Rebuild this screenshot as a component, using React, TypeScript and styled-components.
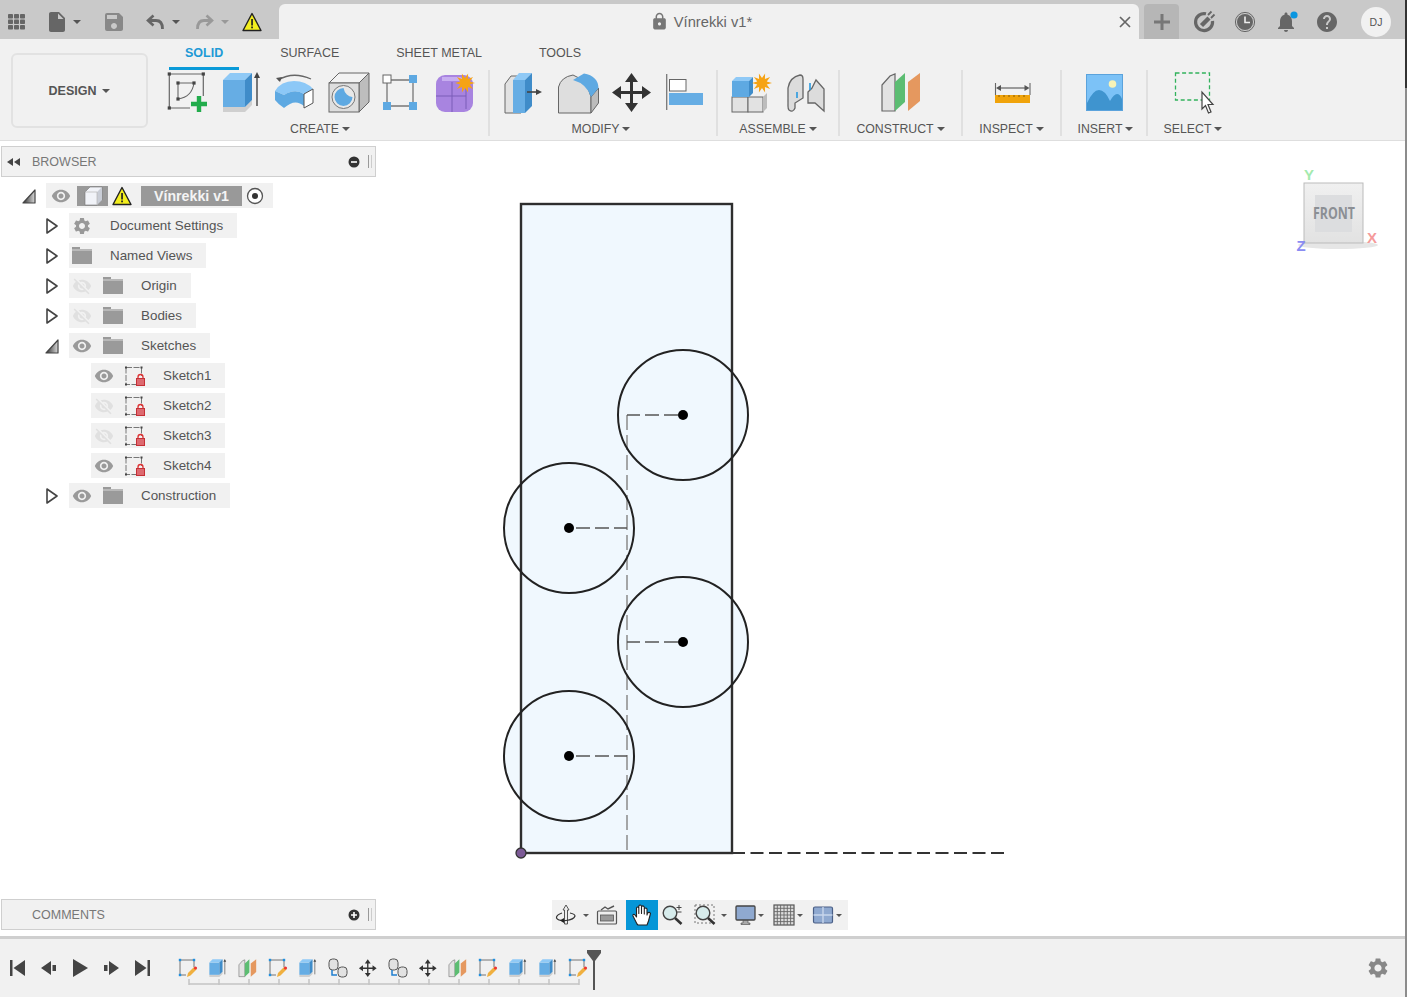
import React from "react";
import styled, { createGlobalStyle } from "styled-components";
import {
  MdHelp,
  MdInsertDriveFile,
  MdLock,
  MdNotifications,
  MdSave,
  MdSettings,
  MdVisibility,
  MdVisibilityOff,
} from "react-icons/md";

const GlobalStyle = createGlobalStyle`
  html, body {
    margin: 0;
    padding: 0;
    background: #fff;
  }
  body {
    font-family: "Liberation Sans", Arial, sans-serif;
    overflow: hidden;
  }
`;

const Page = styled.div`
  position: relative;
  display: flex;
  flex-direction: column;
  width: 1407px;
  height: 997px;
`;

const WindowEdge = styled.div`
  position: absolute;
  top: 0;
  right: 0;
  bottom: 0;
  width: 2px;
  background: #8c8c8c;
`;

const EdgeThumb = styled.div`
  height: 88px;
  background: #333;
`;

/* ---------- title bar ---------- */

const TitleBar = styled.div`
  display: flex;
  flex: none;
  height: 35px;
  padding-top: 4px;
  background: #c9c9c9;
`;

const QuickTools = styled.div`
  display: flex;
  align-items: center;
  width: 279px;
  flex: none;
  color: #666;
`;

const Slot = styled.span<{ $ml?: number; $color?: string }>`
  display: inline-flex;
  flex: none;
  margin-left: ${(p) => p.$ml ?? 0}px;
  color: ${(p) => p.$color ?? "inherit"};
`;

const Caret = styled.span<{ $ml?: number; $color?: string; $size?: number }>`
  display: inline-block;
  flex: none;
  margin-left: ${(p) => p.$ml ?? 0}px;
  border-left: ${(p) => p.$size ?? 4}px solid transparent;
  border-right: ${(p) => p.$size ?? 4}px solid transparent;
  border-top: ${(p) => p.$size ?? 4}px solid ${(p) => p.$color ?? "#555"};
`;

const DocTab = styled.div`
  display: flex;
  align-items: center;
  width: 860px;
  flex: none;
  background: #f1f1f1;
  border-radius: 6px 6px 0 0;
  padding-left: 12px;
  box-sizing: border-box;
`;

const DocTitle = styled.div`
  flex: 1;
  display: flex;
  align-items: center;
  justify-content: center;
  gap: 5px;
  color: #666;
  font-size: 14.7px;
`;

const CloseButton = styled.div`
  width: 28px;
  display: flex;
  justify-content: center;
`;

const PlusButton = styled.div`
  width: 35px;
  margin-left: 5px;
  flex: none;
  display: flex;
  align-items: center;
  justify-content: center;
  background: #b6b6b6;
  border-radius: 4px 4px 0 0;
`;

const StatusTools = styled.div`
  display: flex;
  align-items: center;
  gap: 17px;
  margin-left: 13px;
  color: #666;
`;

const BellBox = styled.span`
  position: relative;
  display: inline-flex;
`;

const BellDot = styled.svg`
  position: absolute;
  right: 0;
  top: 1px;
`;

const Avatar = styled.div`
  width: 30px;
  height: 30px;
  margin-left: 22px;
  flex: none;
  align-self: center;
  border-radius: 50%;
  background: #f1f1f1;
  color: #555;
  font-size: 10.5px;
  display: flex;
  align-items: center;
  justify-content: center;
`;

/* ---------- ribbon ---------- */

const Ribbon = styled.div`
  display: flex;
  flex: none;
  height: 101px;
  padding-left: 11px;
  background: #f1f1f1;
  border-bottom: 1px solid #dedede;
`;

const DesignButton = styled.div`
  width: 137px;
  height: 75px;
  margin-top: 14px;
  box-sizing: border-box;
  border: 2px solid #e2e2e2;
  border-radius: 6px;
  display: flex;
  align-items: center;
  justify-content: center;
  gap: 6px;
  font-size: 12.5px;
  font-weight: 700;
  color: #555;
`;

const ToolArea = styled.div`
  margin-left: 12px;
  display: flex;
  flex-direction: column;
`;

const Tabs = styled.div`
  display: flex;
  gap: 25px;
  height: 31px;
  margin-left: 9px;
`;

const Tab = styled.div<{ $active?: boolean }>`
  box-sizing: border-box;
  padding: 6px 16px 0;
  font-size: 12.5px;
  line-height: 16px;
  color: ${(p) => (p.$active ? "#1e9ad6" : "#555")};
  font-weight: ${(p) => (p.$active ? 700 : 400)};
  border-bottom: 3px solid ${(p) => (p.$active ? "#0a9ad8" : "transparent")};
`;

const Groups = styled.div`
  display: flex;
`;

const Group = styled.div<{ $width: number; $padRight?: number; $padLeft?: number; $last?: boolean }>`
  width: ${(p) => p.$width}px;
  box-sizing: border-box;
  padding-right: ${(p) => p.$padRight ?? 0}px;
  padding-left: ${(p) => p.$padLeft ?? 0}px;
  display: flex;
  flex-direction: column;
  height: 66px;
  border-right: 2px solid ${(p) => (p.$last ? "transparent" : "#e0e0e0")};
`;

const GroupIcons = styled.div<{ $pad: number }>`
  display: flex;
  gap: 9.6px;
  height: 44px;
  padding-left: ${(p) => p.$pad}px;
`;

const GroupLabel = styled.div`
  margin-top: 7px;
  display: flex;
  align-items: center;
  justify-content: center;
  gap: 3px;
  font-size: 12.3px;
  line-height: 16px;
  color: #555;
`;

/* ---------- workspace ---------- */

const Workspace = styled.div`
  position: relative;
  flex: 1;
  min-height: 0;
`;

const Drawing = styled.svg`
  display: block;
  width: 100%;
  height: 100%;
`;

const SidePanel = styled.div`
  position: absolute;
  top: 5px;
  bottom: 6px;
  left: 0;
  width: 376px;
  display: flex;
  flex-direction: column;
`;

const PanelBar = styled.div`
  height: 31px;
  margin-left: 1px;
  flex: none;
  box-sizing: border-box;
  border: 1px solid #cfcfcf;
  background: #f1f1f1;
  display: flex;
  align-items: center;
  font-size: 12.5px;
  color: #777;
`;

const PanelLabel = styled.span<{ $ml: number }>`
  margin-left: ${(p) => p.$ml}px;
  flex: 1;
`;

const PanelHandle = styled.span`
  width: 2px;
  height: 13px;
  margin: 0 3px 0 8px;
  border-left: 1px solid #999;
  border-right: 1px solid #ccc;
`;

const CollapseArrows = styled.svg`
  margin-left: 5px;
`;

const Tree = styled.div`
  flex: 1;
  margin-top: 6px;
  display: flex;
  flex-direction: column;
  gap: 5px;
`;

const TreeRow = styled.div<{ $level: number }>`
  display: flex;
  align-items: center;
  gap: 10px;
  margin-left: ${(p) => [22, 45, 67][p.$level]}px;
`;

const Expander = styled.span`
  width: 14px;
  height: 16px;
  flex: none;
  display: inline-flex;
`;

const Chip = styled.div`
  display: flex;
  align-items: center;
  height: 25px;
  background: #f1f1f1;
  padding: 0 14px 0 3px;
  font-size: 13.4px;
  color: #555;
`;

const RootChip = styled(Chip)`
  padding: 0 9px 0 5px;
`;

const ChipLabel = styled.span`
  margin-left: 18px;
`;

const EyeSlot = styled.span<{ $off?: boolean }>`
  display: inline-flex;
  width: 20px;
  margin-right: 11px;
  justify-content: center;
  color: ${(p) => (p.$off ? "#e0e0e0" : "#9a9a9a")};
`;

const ModelBox = styled.span`
  width: 31px;
  height: 20px;
  margin-left: -5px;
  background: #999;
  display: inline-flex;
  align-items: center;
  justify-content: center;
`;

const RootName = styled.span`
  width: 101px;
  height: 20px;
  margin: 0 4px 0 9px;
  background: #999;
  color: #f4f4f4;
  font-weight: 700;
  font-size: 14.2px;
  display: inline-flex;
  align-items: center;
  justify-content: center;
`;

const NavBar = styled.div`
  position: absolute;
  left: 552px;
  bottom: 6px;
  height: 30px;
  display: flex;
  align-items: center;
  padding: 0 6px 0 3px;
  background: #f1f1f1;
`;

const HandButton = styled.span`
  width: 32px;
  height: 30px;
  margin-left: 8px;
  background: #0696d7;
  display: inline-flex;
  align-items: center;
  justify-content: center;
`;

const ViewCube = styled.svg`
  position: absolute;
  left: 1290px;
  top: 24px;
`;

/* ---------- timeline ---------- */

const Timeline = styled.div`
  flex: none;
  height: 58px;
  display: flex;
  align-items: center;
  padding-left: 10px;
  background: #f1f1f1;
  border-top: 3px solid #cfcfcf;
`;

const Transport = styled.div`
  display: flex;
  gap: 15px;
`;

const History = styled.div`
  position: relative;
  height: 36px;
  margin-left: 28px;
  padding-top: 8px;
  box-sizing: border-box;
`;

const HistoryIcons = styled.div`
  display: flex;
  gap: 10px;
  height: 20px;
`;

const Bracket = styled.svg`
  display: block;
`;

const Marker = styled.svg`
  position: absolute;
  left: 409px;
  top: 0;
`;

const GearSlot = styled.span`
  margin-left: auto;
  margin-right: 17px;
  display: inline-flex;
  color: #888;
`;

/* ---------- drawings ---------- */

type IconProps = { size?: number };

const Warning = ({ size = 20 }: IconProps) => (
  <svg width={size} height={size} viewBox="0 0 20 20">
    <path d="M10 1.5 19 18.5H1Z" fill="#f3ee1e" stroke="#222" strokeWidth="1.4" strokeLinejoin="round" />
    <rect x="9.2" y="7" width="1.7" height="6.5" fill="#222" />
    <rect x="9.2" y="14.5" width="1.7" height="1.8" fill="#222" />
  </svg>
);

const AppGrid = () => (
  <svg width="18" height="16" viewBox="0 0 18 16" fill="#666">
    {[0, 6, 12].map((x) =>
      [0, 5.5, 11].map((y) => <rect key={`${x}-${y}`} x={x} y={y} width="5" height="4.6" rx="0.8" />)
    )}
  </svg>
);

const UndoArrow = ({ color, flip }: { color: string; flip?: boolean }) => (
  <svg width="18" height="18" viewBox="0 0 18 18" transform={flip ? "scale(-1 1)" : undefined}>
    <path d="M7.5 2.5 2 7.5 7.5 12.5" fill="none" stroke={color} strokeWidth="2.6" />
    <path d="M3 7.5H10Q16.5 7.5 16.5 16" fill="none" stroke={color} strokeWidth="2.8" />
  </svg>
);

const ReconnectIcon = () => (
  <svg width="24" height="24" viewBox="0 0 24 24">
    <path d="M14 3.8A8.5 8.5 0 1 0 20.5 11" fill="none" stroke="#666" strokeWidth="3.2" />
    <path d="M9.500 15.500 17 8" stroke="#666" strokeWidth="4.500" />
    <path d="M16 5 19.500 1.500M19 8 22.500 4.500" stroke="#666" strokeWidth="1.800" />
  </svg>
);

const ClockIcon = () => (
  <svg width="24" height="24" viewBox="0 0 24 24">
    <circle cx="12" cy="12" r="9.6" fill="none" stroke="#666" strokeWidth="1" />
    <circle cx="12" cy="12" r="8" fill="#666" />
    <path d="M12 6.5V12.5H17" fill="none" stroke="#eee" strokeWidth="1.6" />
  </svg>
);

const BellIcon = () => (
  <BellBox>
    <MdNotifications size={24} />
    <BellDot width="8" height="8" viewBox="0 0 8 8">
      <circle cx="4" cy="4" r="3.6" fill="#0a96e0" />
    </BellDot>
  </BellBox>
);

const CreateSketch = ({ size = 44 }: IconProps) => (
  <svg width={size} height={size} viewBox="0 0 44 44">
    <path d="M3.3 4H37.3V26M3.3 4V38H24" fill="none" stroke="#666" strokeWidth="1.2" />
    <path d="M12 29V13H28M12 29Q26 27 28 13" fill="none" stroke="#666" strokeWidth="1.1" />
    {[[3.3, 4], [37.3, 4], [3.3, 38], [12, 13], [28, 13], [12, 29]].map(([x, y]) => (
      <rect key={`${x}-${y}`} x={x - 1.6} y={y - 1.6} width="3.2" height="3.2" fill="#444" />
    ))}
    <path d="M33 26V42M25 34H41" stroke="#22ac4c" strokeWidth="4.4" />
  </svg>
);

const Extrude = ({ size = 44 }: IconProps) => (
  <svg width={size} height={size} viewBox="0 0 44 44">
    <path d="M3 37H25L32 30V35L25 42H3Z" fill="#cfcfcf" />
    <path d="M3 10H25V37H3Z" fill="#66ade4" />
    <path d="M3 10 10 3H32L25 10Z" fill="#8fc9f6" />
    <path d="M25 10 32 3V30L25 37Z" fill="#3f8cc9" />
    <path d="M37 6V36" stroke="#444" strokeWidth="1.4" />
    <path d="M37 2 40 8H34Z" fill="#444" />
  </svg>
);

const Sweep = () => (
  <svg width="44" height="44" viewBox="0 0 44 44">
    <path d="M5 10Q20 1 38 9" fill="none" stroke="#666" strokeWidth="1.3" />
    <path d="M3 8 9 7 7 12Z" fill="#555" />
    <path d="M2 21Q8 11 21 11Q33 11 40 19L31 24Q22 18 11 25Z" fill="#8cc8f7" />
    <path d="M2 21 11 25Q22 18 31 24V36Q22 28 11 38Q5 34 2 30Z" fill="#5ea9e2" />
    <path d="M31 24 40 19V33L31 38Z" fill="#fff" stroke="#555" strokeWidth="1" />
  </svg>
);

const Hole = () => (
  <svg width="44" height="44" viewBox="0 0 44 44">
    <path d="M2 13 12 3H42L32 13Z" fill="#f3f3f3" stroke="#666" />
    <path d="M32 13 42 3V32L32 42Z" fill="#bdbdbd" stroke="#666" />
    <rect x="2" y="13" width="30" height="29" fill="#dedede" stroke="#666" />
    <circle cx="16.5" cy="27" r="11.5" fill="#e8e8e8" stroke="#777" />
    <path d="M16.5 18a9 9 0 1 0 9 9 9 12 0 0 1-9-9Z" fill="#5ea9e2" />
  </svg>
);

const BoxEdit = () => (
  <svg width="44" height="44" viewBox="0 0 44 44">
    <path d="M7 10H33V36H7Z" fill="none" stroke="#777" strokeWidth="1.3" />
    <rect x="3" y="5" width="8" height="8" fill="#fff" stroke="#666" />
    {[[29, 5], [3, 32], [29, 32]].map(([x, y]) => (
      <rect key={x * y} x={x} y={y} width="8" height="8" fill="#5ea9e2" />
    ))}
  </svg>
);

const SparkStar = ({ cx, cy, r }: { cx: number; cy: number; r: number }) => {
  const points = Array.from({ length: 20 }, (_, i) => {
    const rad = i % 2 ? r * 0.5 : r;
    const a = (i * Math.PI) / 10;
    return `${cx + rad * Math.cos(a)},${cy + rad * Math.sin(a)}`;
  }).join(" ");
  return <polygon points={points} fill="#f6a314" />;
};

const FormBody = () => (
  <svg width="44" height="44" viewBox="0 0 44 44">
    <rect x="2" y="5" width="37" height="37" rx="9" fill="#a884e0" />
    <path d="M8 9H26L34 15" fill="none" stroke="#c7aef0" strokeWidth="4" />
    <path d="M2 26H32M18 12V42M32 14V39" fill="none" stroke="#7a5cb8" strokeWidth="1" />
    <SparkStar cx={31} cy={13} r={10} />
  </svg>
);

const PressPull = () => (
  <svg width="44" height="44" viewBox="0 0 44 44">
    <path d="M2 14 8 6H18V43H2Z" fill="#e2e2e2" stroke="#666" />
    <path d="M10 10H22V43H10Z" fill="#66ade4" />
    <path d="M10 10 16 3H29L22 10Z" fill="#8fc9f6" />
    <path d="M22 10 29 3V36L22 43Z" fill="#3f8cc9" />
    <path d="M24 22H34" stroke="#444" strokeWidth="1.6" />
    <path d="M39 22 33 19V25Z" fill="#444" />
  </svg>
);

const Fillet = () => (
  <svg width="44" height="44" viewBox="0 0 44 44">
    <path d="M1.500 43V17Q4 7 16 5Q30 10 34 27V43Z" fill="#dedede" stroke="#666" />
    <path d="M34 27 41.500 18V33L34 43Z" fill="#bcbcbc" stroke="#666" />
    <path d="M16 10 27 3.500Q41 6 41.500 18L34 27Q30 14 16 10Z" fill="#5ea9e2" />
  </svg>
);

const MoveIcon = ({ size = 44 }: IconProps) => (
  <svg width={size} height={size} viewBox="0 0 44 44">
    <path d="M21.5 8V37M7 22.5H36" stroke="#333" strokeWidth="3" />
    <path d="M21.5 3 28 12H15ZM21.5 42 28 33H15ZM2 22.5 11 16V29ZM41 22.5 32 16V29Z" fill="#333" />
  </svg>
);

const Align = () => (
  <svg width="44" height="44" viewBox="0 0 44 44">
    <path d="M2.7 4V40" stroke="#777" strokeWidth="1.3" />
    <rect x="5.5" y="9.5" width="16.5" height="11.5" fill="#fff" stroke="#666" />
    <rect x="5" y="23" width="34" height="12" fill="#66ade4" />
  </svg>
);

const NewComponent = () => (
  <svg width="44" height="44" viewBox="0 0 44 44">
    <rect x="2" y="27" width="16" height="15" fill="#e2e2e2" stroke="#666" />
    <rect x="18" y="27" width="15" height="15" fill="#e2e2e2" stroke="#666" />
    <path d="M33 27 37 23V38L33 42Z" fill="#bcbcbc" />
    <rect x="2" y="11" width="17" height="16" fill="#5ea9e2" />
    <path d="M2 11 6 7H23L19 11Z" fill="#8fc9f6" />
    <path d="M19 11 23 7V23L19 27Z" fill="#3f8cc9" />
    <SparkStar cx={32} cy={13} r={10} />
  </svg>
);

const JointIcon = () => (
  <svg width="44" height="44" viewBox="0 0 44 44">
    <path d="M4 18Q6 7 16 5Q19 5 19 9V28L11 33V38Q9 43 5 40Q4 39 4 36Z" fill="#dcdcdc" stroke="#666" strokeWidth="1.3" />
    <path d="M28 18 32 10 40 19V41L31 33H24V22Z" fill="#dcdcdc" stroke="#666" strokeWidth="1.3" />
    <path d="M13 22V28M26 13V20" stroke="#2a9ae0" strokeWidth="1.6" />
  </svg>
);

const ConstructPlane = ({ size = 44 }: IconProps) => (
  <svg width={size} height={size} viewBox="0 0 44 44">
    <path d="M2 15 10 6 15 4V41H2Z" fill="#e2e2e2" stroke="#666" strokeWidth="1.2" />
    <path d="M15 12 25 3V32L15 41Z" fill="#5cbd72" />
    <path d="M28 12 40 3V31L28 41Z" fill="#e5985f" />
  </svg>
);

const MeasureIcon = () => (
  <svg width="44" height="44" viewBox="0 0 44 44">
    <path d="M4.5 13V25M39 13V25" stroke="#666" strokeWidth="1.1" />
    <path d="M7 18H37" stroke="#555" strokeWidth="1.1" />
    <path d="M5 18 10 15V21ZM38.5 18 33.5 15V21Z" fill="#555" />
    <rect x="4" y="25" width="35" height="8" fill="#f0a30a" />
    <path d="M8 25v2M13 25v2M18 25v2M23 25v2M28 25v2M33 25v2" stroke="#8a5c00" strokeWidth="1" />
  </svg>
);

const InsertIcon = () => (
  <svg width="44" height="44" viewBox="0 0 44 44">
    <rect x="3.5" y="4.5" width="36" height="36" fill="#7cc2f7" stroke="#5ba3dc" />
    <circle cx="29.5" cy="14" r="3.8" fill="#f7f3b8" />
    <path d="M4 33Q10 20 16 20Q22 20 27 31Q31 24 34 24Q37 24 39 29V40H4Z" fill="#3f94cf" />
  </svg>
);

const SelectIcon = () => (
  <svg width="44" height="44" viewBox="0 0 44 44">
    <rect x="3.5" y="3" width="34" height="27" fill="none" stroke="#32b25c" strokeWidth="1.3" strokeDasharray="4 2.6" />
    <path d="M30 22V39L33.5 35.5 36.5 43 39 42 36 34.5H41Z" fill="#fff" stroke="#444" strokeWidth="1.2" />
  </svg>
);

const TreeEye = ({ off }: { off?: boolean }) => (
  <EyeSlot $off={off}>{off ? <MdVisibilityOff size={20} /> : <MdVisibility size={20} />}</EyeSlot>
);

const FolderIcon = () => (
  <svg width="20" height="17" viewBox="0 0 20 17">
    <path d="M0 0H8V2H20V17H0Z" fill="#9a9a9a" />
    <path d="M0 3H20" stroke="#d6d6d6" strokeWidth="1" />
  </svg>
);

const TreeSketchIcon = () => (
  <svg width="20" height="20" viewBox="0 0 20 20">
    <path d="M1 1.5H16.5M1 1.5V18.5H11M16.5 1.5V10" fill="none" stroke="#777" strokeWidth="1" strokeDasharray="6 1.5" />
    {[[1, 1.5], [16.5, 1.5], [1, 18.5]].map(([x, y]) => (
      <rect key={`${x}-${y}`} x={x - 1} y={y - 1} width="2" height="2" fill="#444" />
    ))}
    <path d="M13 12.5V11a2.5 2.5 0 0 1 5 0v1.5" fill="none" stroke="#d33" strokeWidth="1.3" />
    <rect x="11.5" y="12.5" width="8" height="7" fill="#dd6a70" stroke="#c62f36" />
  </svg>
);

const ExpandClosed = () => (
  <svg width="14" height="16" viewBox="0 0 14 16">
    <path d="M2 1 12 8 2 15Z" fill="#fff" stroke="#444" strokeWidth="1.6" strokeLinejoin="round" />
  </svg>
);

const ExpandOpen = () => (
  <svg width="14" height="16" viewBox="0 0 14 16">
    <defs>
      <linearGradient id="openFill" x1="0" y1="0" x2="1" y2="0">
        <stop offset="0" stopColor="#333" />
        <stop offset="1" stopColor="#d8d8d8" />
      </linearGradient>
    </defs>
    <path d="M1 15 13 2V15Z" fill="url(#openFill)" stroke="#444" strokeWidth="1.2" strokeLinejoin="round" />
  </svg>
);

const ModelCube = () => (
  <svg width="20" height="20" viewBox="0 0 20 20">
    <path d="M2 6 7 1H19V14L14 19H2Z" fill="#f1f3f8" stroke="#777" strokeWidth="0.6" />
    <path d="M14 6 19 1V14L14 19Z" fill="#c9cdd6" />
    <path d="M2 6H14V19" fill="none" stroke="#b5b5b5" strokeWidth="0.7" />
  </svg>
);

const RadioIcon = () => (
  <svg width="18" height="18" viewBox="0 0 18 18">
    <circle cx="9" cy="9" r="7.5" fill="#fff" stroke="#555" strokeWidth="1.3" />
    <circle cx="9" cy="9" r="3" fill="#333" />
  </svg>
);

const OrbitIcon = () => (
  <svg width="22" height="22" viewBox="0 0 22 22">
    <path d="M11 1 14 6H12.5V20H9.5V6H8Z" fill="#eee" stroke="#444" strokeWidth="0.9" />
    <path d="M7 9Q1 11 1.5 14Q3 17 11 16.5Q19 15.5 20 12Q20 10 15 9" fill="none" stroke="#333" strokeWidth="1.2" />
    <path d="M5 16.5 9 14V19Z" fill="#222" />
  </svg>
);

const LookAtIcon = () => (
  <svg width="22" height="22" viewBox="0 0 22 22">
    <rect x="1.5" y="7" width="19" height="13" rx="1" fill="#eee" stroke="#555" strokeWidth="1.2" />
    <rect x="4.5" y="11" width="13" height="6" fill="#999" stroke="#555" strokeWidth="0.8" />
    <path d="M5 6 9 3 12 5 18 2" fill="none" stroke="#555" strokeWidth="1.4" />
  </svg>
);

const HandIcon = () => (
  <svg width="22" height="24" viewBox="0 0 22 24">
    <path
      d="M6 21 2 13Q1.5 11 3.5 11.5L5.5 14V5Q6.5 3 7.8 5V10.5V3Q9 1 10.5 3V10.5V3.5Q12 2 13.3 4V11V6Q15 4 16 6V12L16.5 10Q18.5 8.5 19.5 10.5L17.5 18 16 22H7Z"
      fill="#fff"
      stroke="#222"
      strokeWidth="1.1"
      strokeLinejoin="round"
    />
  </svg>
);

const ZoomIcon = ({ boxed }: { boxed?: boolean }) => (
  <svg width="22" height="22" viewBox="0 0 22 22">
    {boxed && <rect x="1" y="1" width="19" height="18" fill="none" stroke="#777" strokeWidth="1" strokeDasharray="2 2" />}
    <circle cx="9" cy="9" r="6.8" fill="#d7ecec" stroke="#444" strokeWidth="1.4" />
    <path d="M14 14 20.5 20" stroke="#333" strokeWidth="2.6" />
    {!boxed && <path d="M18 1V6M15.5 3.5H20.5M15.5 8H20.5" stroke="#444" strokeWidth="1" />}
  </svg>
);

const DisplayIcon = () => (
  <svg width="22" height="22" viewBox="0 0 22 22">
    <rect x="1" y="2" width="19" height="14" rx="1" fill="#8fa9d0" stroke="#444" strokeWidth="1.3" />
    <path d="M8 16.5H13V19H15V20.5H6V19H8Z" fill="#aaa" stroke="#444" strokeWidth="0.6" />
  </svg>
);

const GridIcon = () => (
  <svg width="22" height="22" viewBox="0 0 22 22">
    <rect x="1" y="1" width="20" height="20" fill="#ddd" stroke="#555" strokeWidth="1.2" />
    <path
      d="M4.3 1V21M7.6 1V21M11 1V21M14.3 1V21M17.6 1V21M1 4.3H21M1 7.6H21M1 11H21M1 14.3H21M1 17.6H21"
      stroke="#666"
      strokeWidth="0.9"
    />
  </svg>
);

const ViewportsIcon = () => (
  <svg width="22" height="22" viewBox="0 0 22 22">
    <rect x="1.5" y="3" width="19" height="16" rx="1.5" fill="#8fa9d0" stroke="#4a5f86" strokeWidth="1.2" />
    <path d="M11 3V19M1.5 11H20.5" stroke="#c8d6ec" strokeWidth="1.4" />
  </svg>
);

const SketchEdit = () => (
  <svg width="20" height="20" viewBox="0 0 20 20">
    <path d="M2 2H16V9M2 2V17H8" fill="none" stroke="#666" strokeWidth="0.9" />
    {[[2, 2], [16, 2], [2, 17]].map(([x, y]) => (
      <rect key={`${x}-${y}`} x={x - 1.2} y={y - 1.2} width="2.4" height="2.4" fill="#1f8fe0" />
    ))}
    <path d="M9 19 10 15 16 9 18.5 11.5 12.5 17.5Z" fill="#f0b040" />
    <circle cx="17.5" cy="10" r="1.6" fill="#e33" />
  </svg>
);

const JointStack = () => (
  <svg width="20" height="20" viewBox="0 0 20 20">
    <rect x="1" y="1" width="9" height="11" rx="3.5" fill="#e2e2e2" stroke="#555" />
    <rect x="10" y="9" width="9" height="10" rx="3.5" fill="#e2e2e2" stroke="#555" />
    <path d="M4 12V17H9" fill="none" stroke="#1f7fd0" strokeWidth="1.5" />
  </svg>
);

const TransportIcon = ({ d }: { d: string }) => (
  <svg width="16" height="18" viewBox="0 0 16 18">
    <path d={d} fill="#444" />
  </svg>
);

const circles: [number, number, number][] = [
  [683, 415, 14],
  [569, 528, 12],
  [683, 642, 14],
  [569, 756, 12],
];

const SketchDrawing = () => (
  <Drawing viewBox="0 141 1407 795">
    <rect x="521" y="204" width="211" height="649" fill="#f0f8fe" />
    {circles.map(([cx, cy]) => (
      <circle key={cy} cx={cx} cy={cy} r="65" fill="#f0f8fe" />
    ))}
    <path d="M627 415V853" stroke="#8a8a8a" strokeWidth="1.5" strokeDasharray="15 5" />
    {circles.map(([cx, cy, offset]) => (
      <path key={cy} d={`M${cx} ${cy}H627`} stroke="#555" strokeWidth="1.5" strokeDasharray="14 5" strokeDashoffset={offset} />
    ))}
    <rect x="521" y="204" width="211" height="649" fill="none" stroke="#2e2e2e" strokeWidth="2.4" />
    <path d="M732 853H1004" stroke="#333" strokeWidth="1.8" strokeDasharray="13 5.5" />
    {circles.map(([cx, cy]) => (
      <g key={cy}>
        <circle cx={cx} cy={cy} r="65" fill="none" stroke="#222" strokeWidth="2" />
        <circle cx={cx} cy={cy} r="5" fill="#000" />
      </g>
    ))}
    <circle cx="521" cy="853" r="5" fill="#7c5a96" stroke="#333" strokeWidth="1.3" />
  </Drawing>
);

const historySteps = [
  SketchEdit,
  Extrude,
  ConstructPlane,
  SketchEdit,
  Extrude,
  JointStack,
  MoveIcon,
  JointStack,
  MoveIcon,
  ConstructPlane,
  SketchEdit,
  Extrude,
  Extrude,
  SketchEdit,
];

const App = () => {
  const sketches = [
    { name: "Sketch1", off: false },
    { name: "Sketch2", off: true },
    { name: "Sketch3", off: true },
    { name: "Sketch4", off: false },
  ];

  return (
    <>
      <GlobalStyle />
      <Page>
        <TitleBar>
          <QuickTools>
            <Slot $ml={8}>
              <AppGrid />
            </Slot>
            <Slot $ml={19}>
              <MdInsertDriveFile size={24} />
            </Slot>
            <Caret $ml={4} />
            <Slot $ml={21} $color="#888">
              <MdSave size={24} />
            </Slot>
            <Slot $ml={20}>
              <UndoArrow color="#666" />
            </Slot>
            <Caret $ml={8} />
            <Slot $ml={16}>
              <UndoArrow color="#999" flip />
            </Slot>
            <Caret $ml={7} $color="#999" />
            <Slot $ml={13}>
              <Warning />
            </Slot>
          </QuickTools>
          <DocTab>
            <DocTitle>
              <Slot $color="#777">
                <MdLock size={19} />
              </Slot>
              Vínrekki v1*
            </DocTitle>
            <CloseButton>
              <svg width="12" height="12" viewBox="0 0 12 12">
                <path d="M1 1 11 11M11 1 1 11" stroke="#666" strokeWidth="1.7" />
              </svg>
            </CloseButton>
          </DocTab>
          <PlusButton>
            <svg width="16" height="16" viewBox="0 0 16 16">
              <path d="M8 0V16M0 8H16" stroke="#777" strokeWidth="3" />
            </svg>
          </PlusButton>
          <StatusTools>
            <ReconnectIcon />
            <ClockIcon />
            <BellIcon />
            <MdHelp size={24} />
          </StatusTools>
          <Avatar>DJ</Avatar>
        </TitleBar>

        <Ribbon>
          <DesignButton>
            DESIGN
            <Caret />
          </DesignButton>
          <ToolArea>
            <Tabs>
              <Tab $active>SOLID</Tab>
              <Tab>SURFACE</Tab>
              <Tab>SHEET METAL</Tab>
              <Tab>TOOLS</Tab>
            </Tabs>
            <Groups>
              <Group $width={330} $padRight={8}>
                <GroupIcons $pad={6}>
                  <CreateSketch />
                  <Extrude />
                  <Sweep />
                  <Hole />
                  <BoxEdit />
                  <FormBody />
                </GroupIcons>
                <GroupLabel>
                  CREATE
                  <Caret />
                </GroupLabel>
              </Group>
              <Group $width={228} $padRight={4}>
                <GroupIcons $pad={13}>
                  <PressPull />
                  <Fillet />
                  <MoveIcon />
                  <Align />
                </GroupIcons>
                <GroupLabel>
                  MODIFY
                  <Caret />
                </GroupLabel>
              </Group>
              <Group $width={122}>
                <GroupIcons $pad={12}>
                  <NewComponent />
                  <JointIcon />
                </GroupIcons>
                <GroupLabel>
                  ASSEMBLE
                  <Caret />
                </GroupLabel>
              </Group>
              <Group $width={123}>
                <GroupIcons $pad={40}>
                  <ConstructPlane />
                </GroupIcons>
                <GroupLabel>
                  CONSTRUCT
                  <Caret />
                </GroupLabel>
              </Group>
              <Group $width={99}>
                <GroupIcons $pad={28}>
                  <MeasureIcon />
                </GroupIcons>
                <GroupLabel>
                  INSPECT
                  <Caret />
                </GroupLabel>
              </Group>
              <Group $width={86} $padLeft={3}>
                <GroupIcons $pad={18}>
                  <InsertIcon />
                </GroupIcons>
                <GroupLabel>
                  INSERT
                  <Caret />
                </GroupLabel>
              </Group>
              <Group $width={92} $last>
                <GroupIcons $pad={24}>
                  <SelectIcon />
                </GroupIcons>
                <GroupLabel>
                  SELECT
                  <Caret />
                </GroupLabel>
              </Group>
            </Groups>
          </ToolArea>
        </Ribbon>

        <Workspace>
          <SketchDrawing />

          <SidePanel>
            <PanelBar>
              <CollapseArrows width="13" height="8" viewBox="0 0 13 8">
                <path d="M0 4 6 0V8ZM7 4 13 0V8Z" fill="#444" />
              </CollapseArrows>
              <PanelLabel $ml={12}>BROWSER</PanelLabel>
              <svg width="12" height="12" viewBox="0 0 12 12">
                <circle cx="6" cy="6" r="5.5" fill="#333" />
                <path d="M3 6H9" stroke="#fff" strokeWidth="1.6" />
              </svg>
              <PanelHandle />
            </PanelBar>

            <Tree>
              <TreeRow $level={0}>
                <Expander>
                  <ExpandOpen />
                </Expander>
                <RootChip>
                  <EyeSlot>
                    <MdVisibility size={20} />
                  </EyeSlot>
                  <ModelBox>
                    <ModelCube />
                  </ModelBox>
                  <Slot $ml={4}>
                    <Warning />
                  </Slot>
                  <RootName>Vínrekki v1</RootName>
                  <RadioIcon />
                </RootChip>
              </TreeRow>
              <TreeRow $level={1}>
                <Expander>
                  <ExpandClosed />
                </Expander>
                <Chip>
                  <Slot $color="#999">
                    <MdSettings size={20} />
                  </Slot>
                  <ChipLabel>Document Settings</ChipLabel>
                </Chip>
              </TreeRow>
              <TreeRow $level={1}>
                <Expander>
                  <ExpandClosed />
                </Expander>
                <Chip>
                  <FolderIcon />
                  <ChipLabel>Named Views</ChipLabel>
                </Chip>
              </TreeRow>
              <TreeRow $level={1}>
                <Expander>
                  <ExpandClosed />
                </Expander>
                <Chip>
                  <TreeEye off />
                  <FolderIcon />
                  <ChipLabel>Origin</ChipLabel>
                </Chip>
              </TreeRow>
              <TreeRow $level={1}>
                <Expander>
                  <ExpandClosed />
                </Expander>
                <Chip>
                  <TreeEye off />
                  <FolderIcon />
                  <ChipLabel>Bodies</ChipLabel>
                </Chip>
              </TreeRow>
              <TreeRow $level={1}>
                <Expander>
                  <ExpandOpen />
                </Expander>
                <Chip>
                  <TreeEye />
                  <FolderIcon />
                  <ChipLabel>Sketches</ChipLabel>
                </Chip>
              </TreeRow>
              {sketches.map((sketch) => (
                <TreeRow $level={2} key={sketch.name}>
                  <Expander />
                  <Chip>
                    <TreeEye off={sketch.off} />
                    <TreeSketchIcon />
                    <ChipLabel>{sketch.name}</ChipLabel>
                  </Chip>
                </TreeRow>
              ))}
              <TreeRow $level={1}>
                <Expander>
                  <ExpandClosed />
                </Expander>
                <Chip>
                  <TreeEye />
                  <FolderIcon />
                  <ChipLabel>Construction</ChipLabel>
                </Chip>
              </TreeRow>
            </Tree>

            <PanelBar>
              <PanelLabel $ml={30}>COMMENTS</PanelLabel>
              <svg width="12" height="12" viewBox="0 0 12 12">
                <circle cx="6" cy="6" r="5.5" fill="#333" />
                <path d="M3 6H9M6 3V9" stroke="#fff" strokeWidth="1.6" />
              </svg>
              <PanelHandle />
            </PanelBar>
          </SidePanel>

          <ViewCube width="100" height="100" viewBox="1290 165 100 100">
            <defs>
              <linearGradient id="cubeFace" x1="0" y1="0" x2="0" y2="1">
                <stop offset="0" stopColor="#f0f0f0" />
                <stop offset="1" stopColor="#e2e2e2" />
              </linearGradient>
            </defs>
            <ellipse cx="1338" cy="245" rx="40" ry="4" fill="#e6e6e6" />
            <rect x="1304" y="183" width="59" height="60" fill="url(#cubeFace)" stroke="#bbb" strokeWidth="1" />
            <rect x="1315" y="195" width="37" height="37" fill="#dcdddf" />
            <text
              x="1313"
              y="219"
              textLength="42"
              lengthAdjust="spacingAndGlyphs"
              fontFamily="Open Sans, sans-serif"
              fontWeight="700"
              fontSize="15.5"
              fill="#8b8f94"
            >
              FRONT
            </text>
            <text x="1309" y="180" textAnchor="middle" fontFamily="Liberation Sans, sans-serif" fontWeight="700" fontSize="15" fill="#a4eaae">
              Y
            </text>
            <text x="1372" y="243" textAnchor="middle" fontFamily="Liberation Sans, sans-serif" fontWeight="700" fontSize="15" fill="#f59a9a">
              X
            </text>
            <text x="1301" y="251" textAnchor="middle" fontFamily="Liberation Sans, sans-serif" fontWeight="700" fontSize="15" fill="#8a8cf2">
              Z
            </text>
          </ViewCube>

          <NavBar>
            <OrbitIcon />
            <Caret $ml={6} $size={3} />
            <Slot $ml={7}>
              <LookAtIcon />
            </Slot>
            <HandButton>
              <HandIcon />
            </HandButton>
            <Slot $ml={3}>
              <ZoomIcon />
            </Slot>
            <Slot $ml={11}>
              <ZoomIcon boxed />
            </Slot>
            <Caret $ml={5} $size={3} />
            <Slot $ml={8}>
              <DisplayIcon />
            </Slot>
            <Caret $ml={1} $size={3} />
            <Slot $ml={9}>
              <GridIcon />
            </Slot>
            <Caret $ml={2} $size={3} />
            <Slot $ml={9}>
              <ViewportsIcon />
            </Slot>
            <Caret $ml={2} $size={3} />
          </NavBar>
        </Workspace>

        <Timeline>
          <Transport>
            <TransportIcon d="M0 1H2.5V17H0ZM15 1V17L3.5 9Z" />
            <TransportIcon d="M10 2V16L0 9ZM11.5 6H15V12H11.5Z" />
            <TransportIcon d="M1 0 16 9 1 18Z" />
            <TransportIcon d="M6 2V16L16 9ZM1 6H4.5V12H1Z" />
            <TransportIcon d="M1 1V17L12.5 9ZM13.5 1H16V17H13.5Z" />
          </Transport>
          <History>
            <HistoryIcons>
              {historySteps.map((Step, i) => (
                <Step key={i} size={20} />
              ))}
            </HistoryIcons>
            <Bracket width="402" height="8" viewBox="0 0 402 8">
              <path
                d={`M11 6H401${Array.from({ length: 14 }, (_, i) => `M${11 + i * 30} 1V7`).join("")}`}
                fill="none"
                stroke="#c4c4c4"
                strokeWidth="1.5"
              />
            </Bracket>
            <Marker width="14" height="40" viewBox="0 0 14 40">
              <path d="M0 0H14V3L8 11V40H6V11L0 3Z" fill="#555" />
            </Marker>
          </History>
          <GearSlot>
            <MdSettings size={24} />
          </GearSlot>
        </Timeline>

        <WindowEdge>
          <EdgeThumb />
        </WindowEdge>
      </Page>
    </>
  );
};

export default App;
